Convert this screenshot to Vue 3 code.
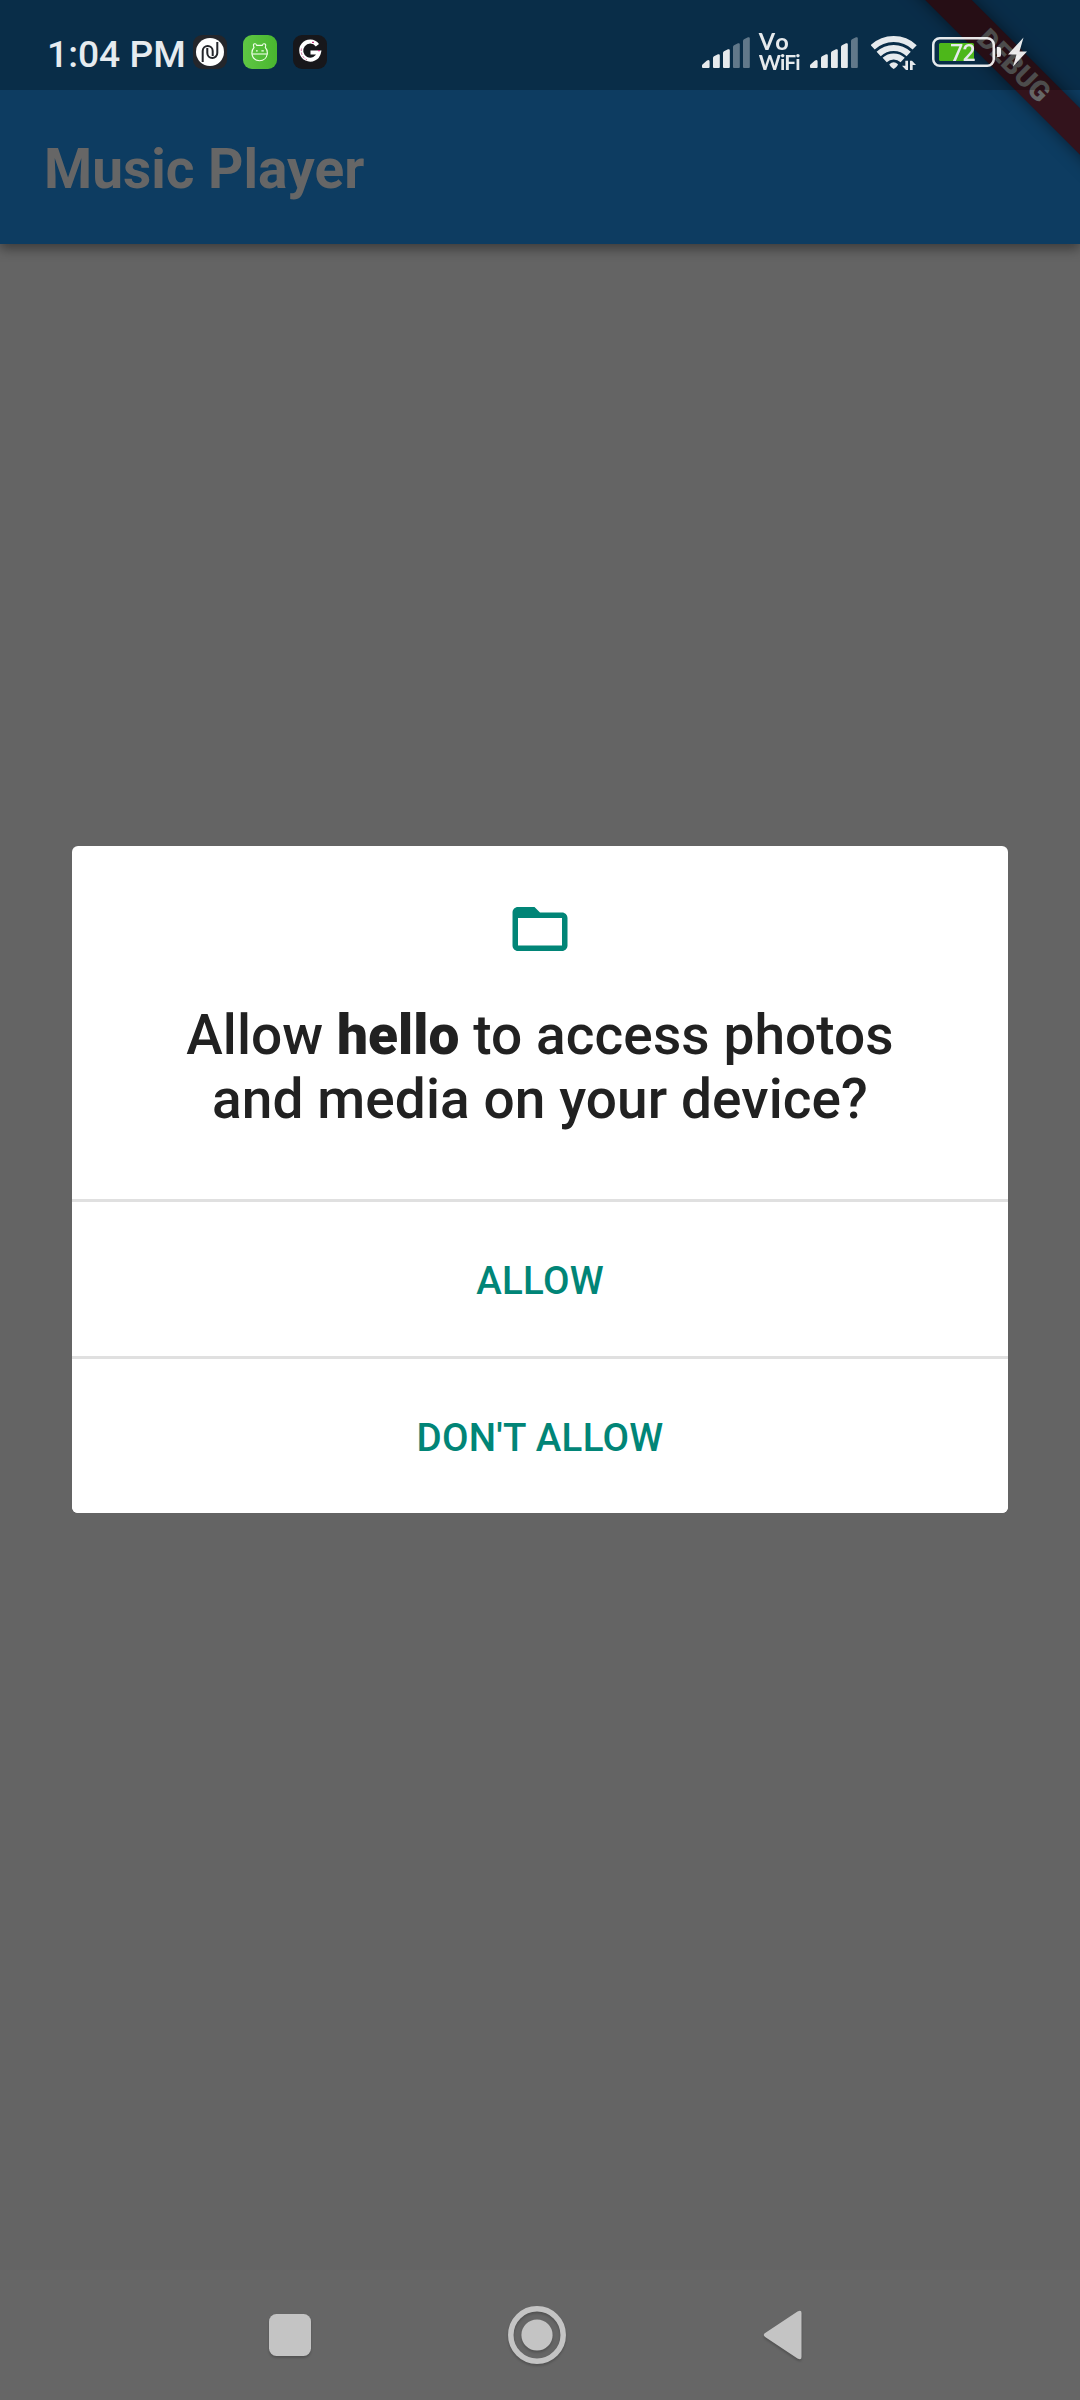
<script setup>
const appName = 'hello'
const actions = ['Allow', "Don't allow"]
const tops = [50, 44, 39, 33, 27]
const simOne = { xs: [0, 11, 21, 31, 41], level: 3 }
const simTwo = { xs: [0, 11, 21, 31, 41], level: 4 }
const bar = (x, i) => {
  const t = tops[i] - 27
  return i === 0
    ? `M${x + 1} 31Q${x} 31 ${x} 30V28.5Q${x} 27.6 ${x + 1} 27L${x + 5} 23.6Q${x + 7.6} 22 ${x + 7.6} 24.5V30Q${x + 7.6} 31 ${x + 6.6} 31Z`
    : `M${x + 1} 31Q${x} 31 ${x} 30V${t + 4}Q${x} ${t + 3} ${x + 1} ${t + 2.2}L${x + 5} ${t + 0.3}Q${x + 6.8} ${t - 0.3} ${x + 6.8} ${t + 1.5}V30Q${x + 6.8} 31 ${x + 5.8} 31Z`
}
</script>

<template>
  <div class="screen">
    <header class="app-bar"><h1>Music Player</h1></header>
    <main class="body"></main>

    <div class="ribbon-clip">
      <div class="ribbon">DEBUG</div>
    </div>

    <div class="status">
      <div class="left">
        <span class="clock">1:04 PM</span>
        <svg class="app" viewBox="0 0 34 34">
          <rect width="34" height="34" rx="9" fill="#24262b" />
          <circle cx="17" cy="17" r="14" fill="#fff" />
          <g fill="none" stroke="#24262b" stroke-width="2">
            <path d="M9.700 27V16A5 5 0 0 1 19.700 16V21" />
            <path d="M24.300 7V18A5 5 0 0 1 14.300 18V13" />
          </g>
        </svg>
        <svg class="app" viewBox="0 0 34 34">
          <defs>
            <linearGradient id="green" x1="0" y1="0" x2="1" y2="0">
              <stop offset="0" stop-color="#5fc744" />
              <stop offset="1" stop-color="#49b62f" />
            </linearGradient>
          </defs>
          <rect width="34" height="34" rx="9" fill="url(#green)" />
          <g fill="none" stroke="#f0ffe9" stroke-width="1.1">
            <path d="M11 12.5Q9.500 8.500 12 8.700Q13 8.500 13.700 10.400H19.300Q20 8.500 21 8.700Q23.500 8.500 22.300 12.500Q24.700 15 24.300 19Q23 25.600 16.600 25.700Q10 25.600 8.900 19Q8.600 15 11 12.500Z" />
            <path d="M9 19H24.300" />
          </g>
          <path d="M13 15.200h1.700v1.400H13zM18.400 15.200h2.400v1.200h-2.400z" fill="#f0ffe9" />
        </svg>
        <svg class="app" viewBox="0 0 34 34">
          <rect width="34" height="34" rx="9" fill="#17171b" />
          <path d="M24.400 10.200A9 9 0 1 0 26 17.500H17.500" fill="none" stroke="#fff" stroke-width="4" />
          <path d="M8.500 13.500Q7.600 18 10 21.800L14 25" fill="none" stroke="#c0357f" stroke-width=".7" stroke-dasharray="2.500 1.500" />
          <path d="M19 7.400h2M25 15.600h2" fill="none" stroke="#c0357f" stroke-width="1.200" />
        </svg>
      </div>

      <div class="right">
        <svg class="signal" viewBox="0 0 48 32">
          <path v-for="(x, i) in simOne.xs" :key="i" :d="bar(x, i)" :class="{ off: i >= simOne.level }" />
        </svg>
        <svg class="vowifi" viewBox="-2 -8 46 54">
          <text x="-.3" y="17.500" font-size="23.500" textLength="30">Vo</text>
          <text x="-.3" y="38" font-size="21" textLength="42">WiFi</text>
        </svg>
        <svg class="signal second" viewBox="0 0 48 32">
          <path v-for="(x, i) in simTwo.xs" :key="i" :d="bar(x, i)" :class="{ off: i >= simTwo.level }" />
        </svg>
        <svg class="wifi" viewBox="0 0 138 105">
          <g fill="none" stroke="#fff" stroke-width="18">
            <path d="M5 37A92 92 0 0 1 131 37" />
            <path d="M23 57A65 65 0 0 1 113 57" />
            <path d="M41 75A39 39 0 0 1 95 75" />
          </g>
          <path d="M55 88Q68 76 81 88Q80 94 68 102Q56 94 55 88Z" fill="#fff" />
          <path d="M103 77h8v28h-6L93 92h10zM117 105V77h6L135 90h-10v15z" fill="#fff" />
        </svg>
        <svg class="battery" viewBox="0 0 96 34">
          <rect x="1.250" y="3.250" width="60.500" height="27.500" rx="6.500" fill="none" stroke="#fff" stroke-width="2.500" />
          <rect x="7" y="8" width="35" height="18" rx="1.500" fill="#55c716" />
          <path d="M65 12h2q2 0 2 2v6q0 2-2 2h-2z" fill="#fff" />
          <text x="18.200" y="25.800" font-size="23" textLength="25.500">72</text>
          <path d="M91.500 2.500L76 19.500H84.500L81 31.500L95 16.500H87.500Z" fill="#fff" />
        </svg>
      </div>
    </div>

    <div class="overlay">
      <section class="dialog" role="dialog">
        <div class="message">
          <svg class="folder" viewBox="0 0 24 24">
            <path d="M20 6h-8l-2-2H4c-1.100 0-1.990.9-1.990 2L2 18c0 1.100.9 2 2 2h16c1.100 0 2-.9 2-2V8c0-1.100-.9-2-2-2zm0 12H4V8h16v10z" fill="#018577" />
          </svg>
          <p>Allow <b>{{ appName }}</b> to access photos<br />and media on your device?</p>
        </div>
        <button v-for="a in actions" :key="a">{{ a }}</button>
      </section>
    </div>

    <nav class="nav">
      <svg viewBox="0 0 58 64"><rect x="8" y="11" width="42" height="42" rx="7.500" /></svg>
      <svg viewBox="0 0 58 64">
        <circle cx="29" cy="32" r="26.200" class="ring" />
        <circle cx="29" cy="32" r="15.600" />
      </svg>
      <svg viewBox="0 0 58 64"><path d="M10.500 34.200Q7 32 10.500 29.800L42.500 8.600Q46.500 6.500 46.500 10V54Q46.500 57.500 42.500 55.400Z" /></svg>
    </nav>
  </div>
</template>

<style>
body {
  margin: 0;
}
</style>

<style scoped>
.screen {
  position: relative;
  display: flex;
  flex-direction: column;
  width: 1080px;
  height: 2400px;
  overflow: hidden;
  background: #646464;
  font-family: Roboto, sans-serif;
}
.app-bar {
  box-sizing: border-box;
  position: relative;
  display: flex;
  align-items: center;
  height: 244px;
  padding: 93px 44px 0;
  background: #0d3c61;
  box-shadow: 0 5px 11px rgba(0, 0, 0, 0.4);
}
.app-bar h1 {
  margin: 0;
  color: #666;
  font-size: 55px;
  font-weight: 700;
  line-height: 64px;
}
.body {
  flex: 1;
}
.ribbon-clip {
  position: absolute;
  top: 0;
  right: 0;
  width: 300px;
  height: 300px;
  overflow: hidden;
}
.ribbon {
  position: absolute;
  left: 84px;
  top: 49px;
  width: 300px;
  height: 33px;
  transform: rotate(45deg);
  background: #33131c;
  box-shadow: 0 0 16px rgba(0, 0, 0, 0.5);
  color: #666;
  font-size: 28px;
  font-weight: 900;
  line-height: 33px;
  text-align: center;
}
.status {
  position: absolute;
  inset: 0 0 auto;
  box-sizing: border-box;
  display: flex;
  justify-content: space-between;
  height: 90px;
  padding: 0 52px 0 47px;
  background: rgba(0, 0, 0, 0.25);
}
.left {
  display: flex;
  align-items: center;
  gap: 16px;
  height: 104px;
}
.clock {
  width: 130px;
  margin-top: 4px;
  color: #e6ebef;
  font-size: 37.2px;
  font-weight: 500;
  white-space: nowrap;
}
.app {
  width: 34px;
  height: 34px;
}
.right {
  display: flex;
  align-items: flex-start;
  opacity: 0.9;
}
.right svg {
  flex: none;
  display: block;
}
.signal {
  width: 48px;
  height: 32px;
  margin-top: 37px;
  fill: #fff;
}
.off {
  opacity: 0.4;
}
.vowifi {
  width: 46px;
  height: 54px;
  margin: 24px 0 0 7px;
  fill: #fff;
  font-family: Lato, sans-serif;
  font-weight: 700;
}
.second {
  margin-left: 7px;
}
.wifi {
  width: 46px;
  height: 35px;
  margin: 35px 0 0 13px;
}
.battery {
  width: 96px;
  height: 34px;
  margin: 35px 0 0 15px;
  fill: #fff;
  font-family: Roboto, sans-serif;
  font-weight: 500;
}
.overlay {
  position: absolute;
  inset: 90px 0 130px;
  display: flex;
  align-items: center;
  justify-content: center;
  padding-bottom: 1px;
}
.dialog {
  width: 936px;
  overflow: hidden;
  border-radius: 6px;
  background: #fff;
}
.message {
  box-sizing: border-box;
  display: flex;
  flex-direction: column;
  align-items: center;
  height: 353px;
  padding-top: 50px;
}
.folder {
  width: 66px;
  height: 66px;
}
.message p {
  margin: 41px 0 0;
  color: #212121;
  font-size: 55px;
  font-weight: 500;
  letter-spacing: 0.08px;
  line-height: 64px;
  text-align: center;
}
.message b {
  font-weight: 900;
}
.dialog button {
  display: block;
  box-sizing: border-box;
  width: 100%;
  height: 157px;
  padding: 2px 0 0;
  border: 0;
  border-top: 3px solid #e0e0e0;
  background: #fff;
  color: #018577;
  font: 500 38.5px Roboto, sans-serif;
  letter-spacing: 0.28px;
  text-transform: uppercase;
}
.nav {
  position: relative;
  box-sizing: border-box;
  display: flex;
  align-items: center;
  gap: 189px;
  height: 130px;
  padding-left: 261px;
  background: #666;
}
.nav svg {
  width: 58px;
  height: 64px;
  fill: #c4c4c4;
  filter: drop-shadow(0 2px 1px rgba(0, 0, 0, 0.2));
}
.nav .ring {
  fill: none;
  stroke: #c4c4c4;
  stroke-width: 5.5;
}
</style>
